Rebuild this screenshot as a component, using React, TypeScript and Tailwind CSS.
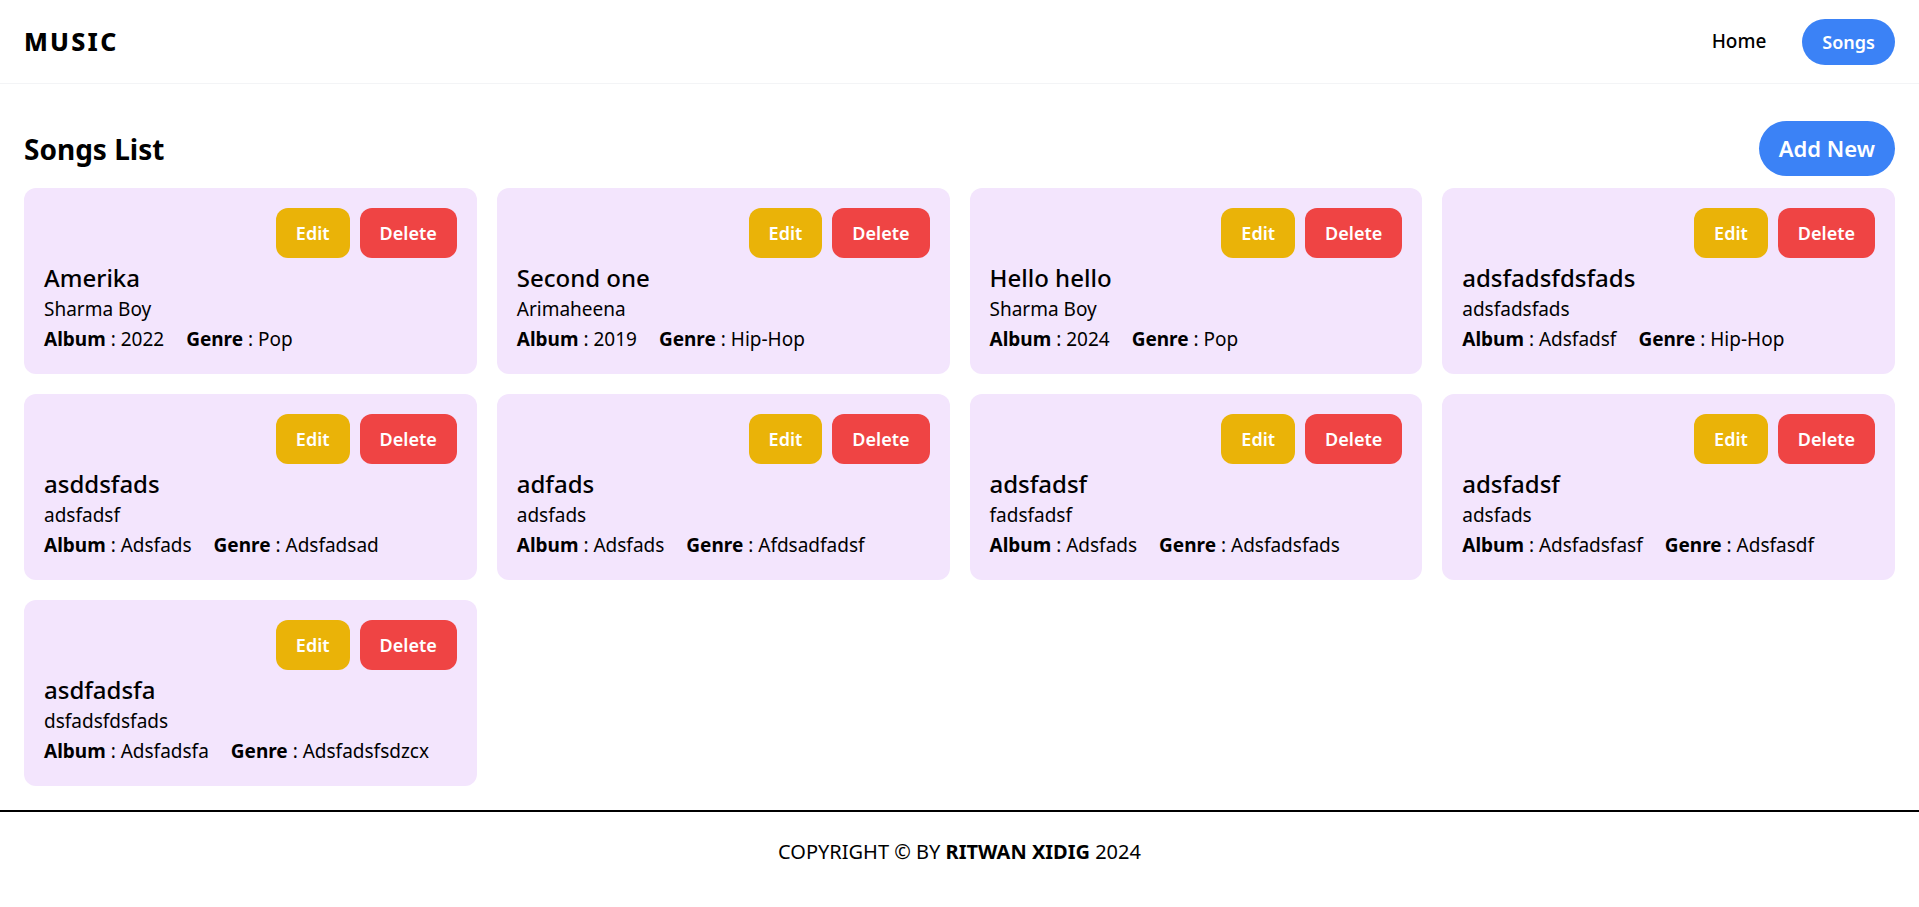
import React from "react";

type Song = {
  title: string;
  artist: string;
  album: string;
  genre: string;
};

const songs: Song[] = [
  { title: "Amerika", artist: "Sharma Boy", album: "2022", genre: "Pop" },
  { title: "Second one", artist: "Arimaheena", album: "2019", genre: "Hip-Hop" },
  { title: "Hello hello", artist: "Sharma Boy", album: "2024", genre: "Pop" },
  { title: "adsfadsfdsfads", artist: "adsfadsfads", album: "Adsfadsf", genre: "Hip-Hop" },
  { title: "asddsfads", artist: "adsfadsf", album: "Adsfads", genre: "Adsfadsad" },
  { title: "adfads", artist: "adsfads", album: "Adsfads", genre: "Afdsadfadsf" },
  { title: "adsfadsf", artist: "fadsfadsf", album: "Adsfads", genre: "Adsfadsfads" },
  { title: "adsfadsf", artist: "adsfads", album: "Adsfadsfasf", genre: "Adsfasdf" },
  { title: "asdfadsfa", artist: "dsfadsfdsfads", album: "Adsfadsfa", genre: "Adsfadsfsdzcx" },
];

function SongCard({ song }: { song: Song }) {
  return (
    <div className="rounded-xl bg-[#f3e5fd] p-5">
      <div className="flex justify-end gap-[10px]">
        <button type="button" className="rounded-xl bg-[#eab308] px-5 py-[11px] text-lg font-semibold leading-7 text-white">
          Edit
        </button>
        <button type="button" className="rounded-xl bg-[#ef4444] px-5 py-[11px] text-lg font-semibold leading-7 text-white">
          Delete
        </button>
      </div>
      <h3 className="mt-1 text-2xl font-medium leading-8">{song.title}</h3>
      <p className="text-[19px] leading-[30px]">{song.artist}</p>
      <p className="text-[19px] leading-[30px]">
        <span className="font-bold">Album</span> : {song.album}
        <span className="ml-[22px] font-bold">Genre</span> : {song.genre}
      </p>
    </div>
  );
}

export default function App() {
  return (
    <div className="min-h-screen bg-white text-black" style={{ fontFamily: '"Noto Sans", "Open Sans", sans-serif' }}>
      <header className="flex h-[84px] items-center justify-between border-b border-gray-100 px-6">
        <div className="text-[25px] font-extrabold tracking-[0.09em]">MUSIC</div>
        <nav className="flex items-center gap-9">
          <a className="text-[19px] font-medium">Home</a>
          <a className="rounded-full bg-[#3b82f6] px-5 py-2 text-lg font-semibold leading-[30px] text-white">Songs</a>
        </nav>
      </header>

      <main className="px-6 pt-[37px] pb-6">
        <div className="mb-3 flex items-center justify-between">
          <h1 className="text-[28px] font-bold">Songs List</h1>
          <button type="button" className="rounded-full bg-[#3b82f6] px-5 py-3 text-[22px] font-semibold leading-[31px] text-white">
            Add New
          </button>
        </div>
        <div className="grid grid-cols-4 gap-5">
          {songs.map((s, i) => (
            <SongCard key={i} song={s} />
          ))}
        </div>
      </main>

      <footer className="border-t-2 border-black py-[26px] text-center text-xl leading-7">
        COPYRIGHT © BY <span className="font-bold">RITWAN XIDIG</span> 2024
      </footer>
    </div>
  );
}
